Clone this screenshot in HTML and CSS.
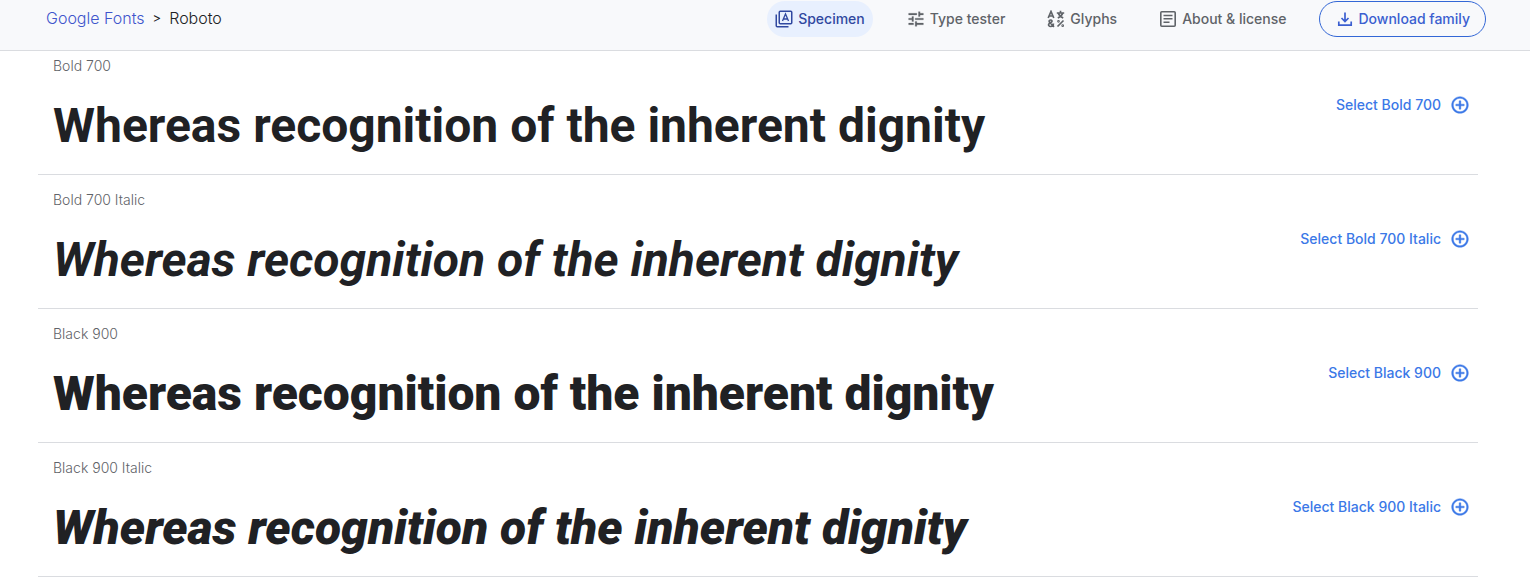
FILE: index.html
```html
<!DOCTYPE html>
<html lang="en">
<head>
<meta charset="utf-8">
<title>Roboto - Google Fonts</title>
<link rel="stylesheet" href="styles.css">
</head>
<body>
<svg class="sprite" aria-hidden="true">
  <symbol id="add" viewBox="0 0 24 24"><path stroke="currentColor" stroke-width=".5" d="M13 7h-2v4H7v2h4v4h2v-4h4v-2h-4V7zm-1-5C6.480 2 2 6.480 2 12s4.480 10 10 10 10-4.480 10-10S17.520 2 12 2zm0 18c-4.410 0-8-3.590-8-8s3.590-8 8-8 8 3.590 8 8-3.590 8-8 8z"/></symbol>
</svg>
<header class="topbar">
  <nav class="breadcrumb" aria-label="Breadcrumb">
    <a href="#">Google Fonts</a><span class="separator">&gt;</span><span>Roboto</span>
  </nav>
  <nav class="tabs" aria-label="Sections">
    <a class="tab active" href="#">
      <svg class="icon" viewBox="0 0 18 18" fill="none" stroke="currentColor" stroke-width="1.500"><rect x="4.250" y="1.250" width="12.500" height="12.500" rx="1"/><path d="M1.250 4.500v11.250q0 1 1 1H13.500"/><path d="M7.500 11l3-7 3 7M8.500 9h4" stroke-width="1.300"/></svg>
      Specimen</a>
    <a class="tab" href="#">
      <svg class="icon" viewBox="1 1 22 22" fill="currentColor" stroke="currentColor" stroke-width=".3"><path d="M3 17v2h6v-2H3zM3 5v2h10V5H3zm10 16v-2h8v-2h-8v-2h-2v6h2zM7 9v2H3v2h4v2h2V9H7zm14 4v-2H11v2h10zm-6-4h2V7h4V5h-4V3h-2v6z"/></svg>
      Type tester</a>
    <a class="tab" href="#">
      <svg class="icon" viewBox="0 0 18 18" fill="none" stroke="currentColor" stroke-width="1.700"><path d="M1.200 8l2.800-6.500L6.800 8M2.200 6h3.600M13.500.8v2M9.800 3h7.400M11.200 3c.8 2.300 2.600 4 5 5M15.800 3c-.8 2.300-2.600 4-5 5M7 16.800L2.500 12c-.8-1.200.2-2 1.200-2s1.800 1.200.8 2L2.200 13.500c-1.400 1.600 0 3 1.400 3 1.700 0 2.800-1.500 2.800-3M10.500 16.500l6-6"/><circle cx="11.500" cy="11.300" r=".5"/><circle cx="15.700" cy="15.700" r=".5"/></svg>
      Glyphs</a>
    <a class="tab" href="#">
      <svg class="icon" viewBox="0 0 18 18" fill="none" stroke="currentColor" stroke-width="1.600"><rect x="1.800" y="1.800" width="14.400" height="14.400" rx="1"/><path d="M4.500 5.500h9M4.500 8.750h9M4.500 12.250h6"/></svg>
      About &amp; license</a>
  </nav>
  <button class="download" type="button">
    <svg class="icon" viewBox="0 0 18 18" fill="none" stroke="currentColor" stroke-width="1.700"><path d="M9 2.500v8.700M5.500 8L9 11.500 12.500 8M2.800 11.500v3.700h12.400v-3.700"/></svg>
    Download family</button>
</header>
<main class="styles">
  <section class="style">
    <div><h2 class="label">Bold 700</h2><p class="sample bold">Whereas recognition of the inherent dignity</p></div>
    <button class="select" type="button">Select Bold 700<svg class="add"><use href="#add"/></svg></button>
  </section>
  <section class="style">
    <div><h2 class="label">Bold 700 Italic</h2><p class="sample bold italic">Whereas recognition of the inherent dignity</p></div>
    <button class="select" type="button">Select Bold 700 Italic<svg class="add"><use href="#add"/></svg></button>
  </section>
  <section class="style">
    <div><h2 class="label">Black 900</h2><p class="sample black">Whereas recognition of the inherent dignity</p></div>
    <button class="select" type="button">Select Black 900<svg class="add"><use href="#add"/></svg></button>
  </section>
  <section class="style">
    <div><h2 class="label">Black 900 Italic</h2><p class="sample black italic">Whereas recognition of the inherent dignity</p></div>
    <button class="select" type="button">Select Black 900 Italic<svg class="add"><use href="#add"/></svg></button>
  </section>
</main>
</body>
</html>
```
FILE: styles.css
```css
* { box-sizing: border-box; }
body {
  margin: 0;
  background: #fff;
  color: #202124;
  font-family: Inter, "Open Sans", sans-serif;
}
a { color: inherit; text-decoration: none; }
button { font: inherit; background: none; border: 0; padding: 0; cursor: pointer; }
.sprite { display: none; }

.topbar {
  position: sticky;
  top: 0;
  z-index: 1;
  display: flex;
  align-items: flex-start;
  padding: 1px 44px 13px 46px;
  background: #f8f9fb;
  border-bottom: 1px solid #dadce0;
}
.breadcrumb {
  flex: 1;
  display: flex;
  align-items: center;
  gap: 8px;
  font-size: 16px;
  font-weight: 300;
  line-height: 34px;
}
.breadcrumb a { color: #3f55cc; }
.separator { font-size: 13px; font-weight: 400; }
.tabs { display: flex; gap: 26px; margin-right: 24px; }
.tab {
  display: flex;
  align-items: center;
  gap: 5px;
  height: 36px;
  padding: 0 8px 1px;
  border-radius: 18px;
  color: #5f6368;
  font-size: 14px;
  font-weight: 500;
}
.tab.active { background: #e8f0fe; color: #3048a0; }
.icon { width: 18px; height: 18px; flex: none; }
.download {
  display: flex;
  align-items: center;
  gap: 5px;
  height: 36px;
  padding: 0 15px 1px 16px;
  border: 1px solid #3367d6;
  border-radius: 18px;
  color: #3b5fd0;
  font-size: 14px;
  font-weight: 500;
}

/* The first row tucks partly under the sticky bar. */
.styles { margin: -10px 52px 0 38px; }
.style {
  display: flex;
  justify-content: space-between;
  padding: 0 8px 0 15px;
  border-bottom: 1px solid #dadce0;
}
.label { margin: 16px 0 15px; color: #5f6368; font-size: 14px; font-weight: 300; line-height: 18px; }
.sample { margin: 0 0 12px; font-family: Roboto, sans-serif; font-size: 48px; line-height: 72px; }
.bold { font-weight: 700; }
.black { font-weight: 900; }
.italic { font-style: italic; }
.select {
  display: flex;
  align-items: center;
  align-self: flex-start;
  gap: 9px;
  height: 127px;
  color: #3b78e7;
  font-size: 14px;
  font-weight: 500;
}
.add { width: 20px; height: 20px; fill: currentColor; }
```
